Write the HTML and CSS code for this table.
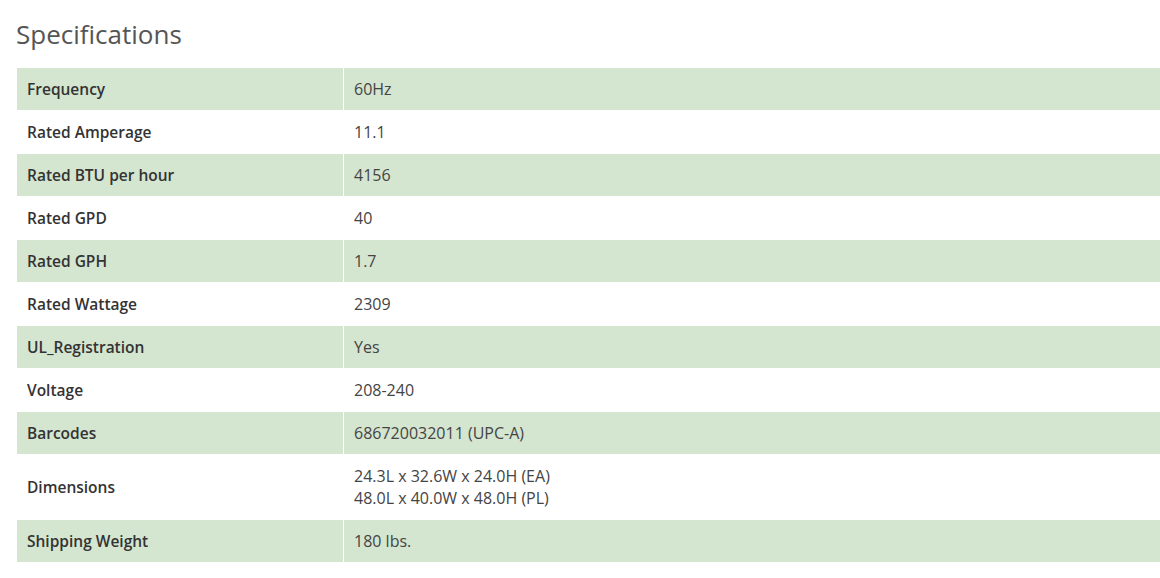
FILE: index.html
```html
<!DOCTYPE html>
<html>
<head>
<meta charset="utf-8">
<link rel="stylesheet" href="styles.css">
</head>
<body>
<div class="page">
  <h2 class="title">Specifications</h2>
  <div class="specs">
    <div class="row alt"><div class="label">Frequency</div><div class="value">60Hz</div></div>
    <div class="row"><div class="label">Rated Amperage</div><div class="value">11.1</div></div>
    <div class="row alt"><div class="label">Rated BTU per hour</div><div class="value">4156</div></div>
    <div class="row"><div class="label">Rated GPD</div><div class="value">40</div></div>
    <div class="row alt"><div class="label">Rated GPH</div><div class="value">1.7</div></div>
    <div class="row"><div class="label">Rated Wattage</div><div class="value">2309</div></div>
    <div class="row alt"><div class="label">UL_Registration</div><div class="value">Yes</div></div>
    <div class="row"><div class="label">Voltage</div><div class="value">208-240</div></div>
    <div class="row alt"><div class="label">Barcodes</div><div class="value">686720032011 (UPC-A)</div></div>
    <div class="row tall"><div class="label">Dimensions</div><div class="value">24.3L x 32.6W x 24.0H (EA)<br>48.0L x 40.0W x 48.0H (PL)</div></div>
    <div class="row alt"><div class="label">Shipping Weight</div><div class="value">180 lbs.</div></div>
  </div>
</div>
</body>
</html>
```
FILE: styles.css
```css
html, body {
  margin: 0;
  padding: 0;
  background: #fff;
  overflow: hidden;
}
.page {
  padding: 16px 0 0 17px;
  font-family: "Open Sans", "Liberation Sans", sans-serif;
}
.title {
  margin: 0 0 16px -1px;
  font-size: 26px;
  font-weight: 400;
  line-height: 36px;
  color: #555;
}
.specs {
  width: 1160px;
  display: flex;
  flex-direction: column;
  gap: 1px;
}
.row {
  display: grid;
  grid-template-columns: 326px 1fr;
  column-gap: 1px;
  min-height: 42px;
}
.row.tall {
  min-height: 64px;
}
.label, .value {
  display: flex;
  flex-direction: column;
  justify-content: center;
  padding: 0 10px;
  font-size: 16px;
  line-height: 22px;
}
.label {
  font-size: 15.5px;
  font-weight: 600;
  color: #333;
}
.value {
  font-weight: 400;
  color: #444;
}
.row.alt .label, .row.alt .value {
  background: #d4e5d0;
}
```
